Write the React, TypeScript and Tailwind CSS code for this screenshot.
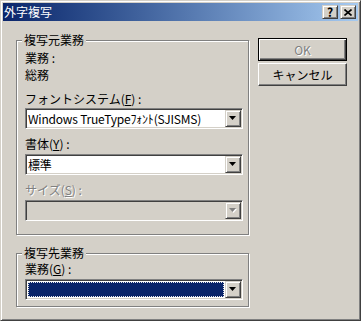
const font = "font-['Noto_Sans_CJK_JP','Noto_Sans',sans-serif]";

const raised =
    "border border-t-[#d4d0c8] border-l-[#d4d0c8] border-r-[#404040] border-b-[#404040] shadow-[inset_1px_1px_0_#fff,inset_-1px_-1px_0_#808080]";

function Arrow({ disabled }: { disabled?: boolean }) {
    return (
        <svg width="8" height="5" viewBox="0 0 8 5">
            {disabled && <path d="M1 1h7l-3.5 4z" fill="#fff" />}
            <path d="M0 0h7l-3.5 4z" fill={disabled ? "#808080" : "#000"} />
        </svg>
    );
}

function Combo({
    text,
    disabled,
    selected,
}: {
    text?: string;
    disabled?: boolean;
    selected?: boolean;
}) {
    return (
        <div
            className={`flex h-[21px] w-[218px] border border-t-[#808080] border-l-[#808080] border-r-white border-b-white p-px shadow-[inset_1px_1px_0_#404040,inset_-1px_-1px_0_#d4d0c8] ${
                disabled ? "bg-[#d4d0c8]" : "bg-white"
            }`}
        >
            <div className="flex-1 flex items-center">
                {selected ? (
                    <div className="ml-px mr-[1px] h-[15px] w-full border border-dotted border-[#e8e8e8] bg-[#0a246a]" />
                ) : (
                    <span className="pl-[1px] text-[12px] leading-none tracking-[-0.2px] text-black">{text}</span>
                )}
            </div>
            <div className={`flex h-[17px] w-[16px] items-center justify-center bg-[#d4d0c8] ${raised}`}>
                <Arrow disabled={disabled} />
            </div>
        </div>
    );
}

function Label({ children, disabled }: { children: React.ReactNode; disabled?: boolean }) {
    return (
        <div
            className={`h-[17px] text-[12px] leading-[17px] ${
                disabled ? "text-[#808080] [text-shadow:1px_1px_0_#fff]" : "text-black"
            }`}
        >
            {children}
        </div>
    );
}

function Group({
    title,
    className,
    children,
}: {
    title: string;
    className: string;
    children: React.ReactNode;
}) {
    return (
        <div
            className={`relative w-[233px] border border-[#808080] shadow-[inset_1px_1px_0_#fff,1px_1px_0_#fff] ${className}`}
        >
            <span className="absolute left-[5px] top-[-8px] bg-[#d4d0c8] px-[2px] text-[12px] leading-[13px] text-black">
                {title}
            </span>
            {children}
        </div>
    );
}

export default function App() {
    return (
        <div
            className={`flex h-[321px] w-[361px] flex-col bg-[#d4d0c8] p-[2px] border border-t-[#d4d0c8] border-l-[#d4d0c8] border-r-[#404040] border-b-[#404040] shadow-[inset_1px_1px_0_#fff,inset_-1px_-1px_0_#808080] ${font}`}
        >
            {/* title bar */}
            <div className="flex h-[18px] items-center bg-gradient-to-r from-[#0a246a] to-[#a6caf0] pl-[1px] pr-[2px]">
                <span className="flex-1 text-[12px] leading-none text-white">外字複写</span>
                <div className={`flex h-[14px] w-[16px] items-center justify-center bg-[#d4d0c8] ${raised}`}>
                    <span className="text-[12px] font-bold leading-none text-black">?</span>
                </div>
                <div className={`ml-[2px] flex h-[14px] w-[16px] items-center justify-center bg-[#d4d0c8] ${raised}`}>
                    <svg width="8" height="7" viewBox="0 0 8 7">
                        <path d="M0.5 0.5l7 6M7.5 0.5l-7 6" stroke="#000" strokeWidth="1.6" />
                    </svg>
                </div>
            </div>

            {/* body */}
            <div className="flex flex-1 pl-[13px]">
                <div className="flex flex-col pt-[19px]">
                    <Group title="複写元業務" className="h-[195px] pl-[8px] pt-[8px]">
                        <Label>業務 :</Label>
                        <Label>総務</Label>
                        <div className="mt-[7px]">
                            <Label>
                                フォントシステム(<span className="underline">F</span>) :
                            </Label>
                        </div>
                        <div className="mt-[1px]">
                            <Combo text="Windows TrueTypeﾌｫﾝﾄ(SJISMS)" />
                        </div>
                        <div className="mt-[6px]">
                            <Label>
                                書体(<span className="underline">Y</span>) :
                            </Label>
                        </div>
                        <div className="mt-[2px]">
                            <Combo text="標準" />
                        </div>
                        <div className="mt-[6px]">
                            <Label disabled>
                                サイズ(<span className="underline">S</span>) :
                            </Label>
                        </div>
                        <div className="mt-[2px]">
                            <Combo disabled />
                        </div>
                    </Group>
                    <Group title="複写先業務" className="mt-[18px] h-[54px] pl-[8px] pt-[6px]">
                        <Label>
                            業務(<span className="underline">G</span>) :
                        </Label>
                        <div className="mt-[2px]">
                            <Combo selected />
                        </div>
                    </Group>
                </div>

                <div className="ml-[9px] flex flex-col gap-[2px] pt-[17px]">
                    <div className="flex h-[23px] w-[89px] items-center justify-center border border-black bg-[#d4d0c8] shadow-[inset_1px_1px_0_#fff,inset_-1px_-1px_0_#404040,inset_-2px_-2px_0_#808080]">
                        <span className="text-[12px] leading-none text-[#808080] [text-shadow:1px_1px_0_#fff]">OK</span>
                    </div>
                    <div className={`flex h-[23px] w-[89px] items-center justify-center bg-[#d4d0c8] border border-t-white border-l-white border-r-[#404040] border-b-[#404040] shadow-[inset_-1px_-1px_0_#808080]`}>
                        <span className="text-[12px] leading-none text-black">キャンセル</span>
                    </div>
                </div>
            </div>
        </div>
    );
}
